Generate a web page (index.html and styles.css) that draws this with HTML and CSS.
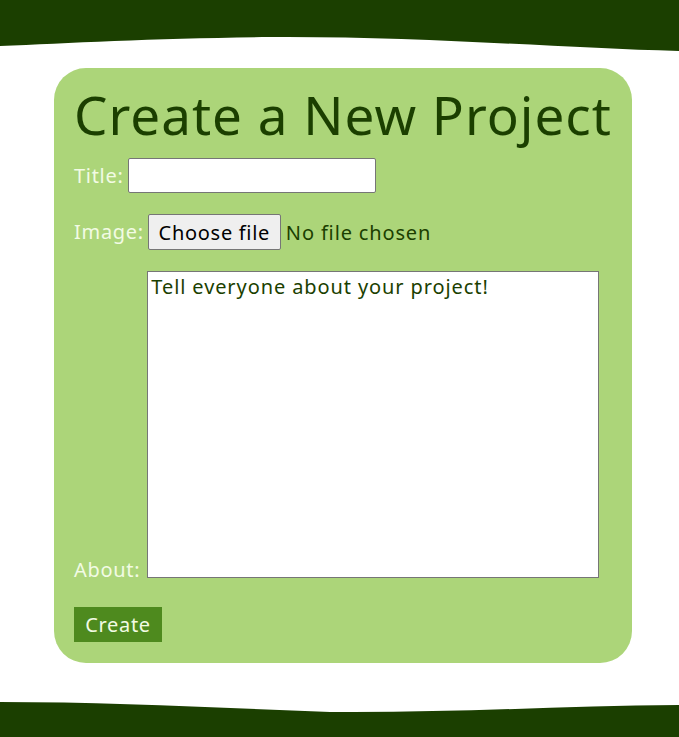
FILE: index.html
```html
<!DOCTYPE html>
<html>
<head>
<meta charset="utf-8">
<link rel="stylesheet" href="styles.css">
</head>
<body>
<svg class="wave wave-top" viewBox="0 0 679 52" preserveAspectRatio="none" aria-hidden="true">
  <path d="M0,0 H679 V51 C560,48 420,36 270,37 C160,38 70,43 0,46 Z" fill="#1b3f00"/>
</svg>
<main class="page">
  <section class="card">
    <h1 class="title">Create a New Project</h1>
    <form class="form">
      <div class="row row-title">
        <label class="label" for="t">Title:</label>
        <input class="text-input" id="t" type="text">
      </div>
      <div class="row row-image">
        <label class="label" for="img">Image:</label>
        <label class="file-btn" for="img">Choose file</label>
        <input class="file-hidden" id="img" type="file">
        <span class="file-name">No file chosen</span>
      </div>
      <div class="row row-about">
        <label class="label" for="about">About:</label>
        <textarea class="about" id="about">Tell everyone about your project!</textarea>
      </div>
      <div class="row row-submit">
        <button class="submit" type="button">Create</button>
      </div>
    </form>
  </section>
</main>
<svg class="wave wave-bottom" viewBox="0 0 679 37" preserveAspectRatio="none" aria-hidden="true">
  <path d="M0,2 C110,2 220,8 330,12 C450,13 560,6 679,5 V37 H0 Z" fill="#1b3f00"/>
</svg>
</body>
</html>
```
FILE: styles.css
```css
html, body {
  margin: 0;
  padding: 0;
  background: #ffffff;
}
body {
  font-family: "Noto Sans", sans-serif;
  width: 679px;
  height: 737px;
  overflow: hidden;
}
.wave {
  display: block;
  width: 679px;
}
.wave-top {
  height: 52px;
}
.wave-bottom {
  height: 37px;
  margin-top: 37px;
}
.page {
  display: flex;
  padding-left: 54px;
  padding-top: 16px;
}
.card {
  width: 578px;
  height: 595px;
  box-sizing: border-box;
  background: #acd579;
  border-radius: 32px;
  padding: 12px 20px 0 20px;
}
.title {
  margin: 0;
  font-weight: 400;
  font-size: 53px;
  line-height: 70px;
  color: #1b3f00;
  letter-spacing: 1px;
}
.form {
  display: flex;
  flex-direction: column;
  margin-top: 8px;
}
.row {
  display: flex;
  align-items: center;
  font-size: 20px;
  letter-spacing: 0.7px;
}
.row-title {
  height: 35px;
  margin-bottom: 21px;
}
.row-image {
  height: 36px;
  margin-bottom: 21px;
}
.row-about {
  align-items: flex-end;
  margin-bottom: 29px;
}
.label {
  color: #f2fbe4;
  line-height: 22px;
  margin-right: 4px;
}
.row-about .label {
  line-height: 17px;
  margin-right: 7px;
}
.text-input {
  width: 248px;
  height: 35px;
  box-sizing: border-box;
  padding: 1px 2px;
  margin: 0;
  border: 1px solid #767676;
  border-radius: 2px;
  background: #ffffff;
  font-family: inherit;
  font-size: 20px;
}
.file-btn {
  display: flex;
  align-items: center;
  justify-content: center;
  width: 133px;
  height: 36px;
  box-sizing: border-box;
  border: 1px solid #767676;
  border-radius: 2px;
  background: #efefef;
  color: #000000;
}
.file-hidden {
  display: none;
}
.file-name {
  color: #1b3f00;
  letter-spacing: 0.85px;
  margin-left: 5px;
}
.about {
  width: 452px;
  height: 307px;
  box-sizing: border-box;
  margin: 0;
  padding: 1px 3px;
  border: 1px solid #767676;
  background: #ffffff;
  font-family: inherit;
  font-size: 20px;
  letter-spacing: 0.9px;
  color: #1b3f00;
  resize: none;
}
.submit {
  font-family: inherit;
  font-size: 20px;
  letter-spacing: 0.7px;
  color: #f2fbe4;
  background: #4e8a1e;
  border: none;
  border-radius: 0;
  padding: 0;
  height: 35px;
  width: 88px;
}
```
